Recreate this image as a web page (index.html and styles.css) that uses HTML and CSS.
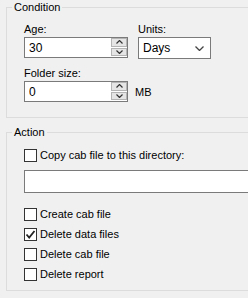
FILE: index.html
```html
<!DOCTYPE html>
<html lang="en">
<head>
    <meta charset="UTF-8">
    <meta name="viewport" content="width=device-width, initial-scale=1.0">
    <title>Cleanup rule</title>
    <link rel="stylesheet" href="styles.css">
</head>
<body>
    <div class="dialog">
        <fieldset class="group condition">
            <legend>Condition</legend>
            <div class="group-body">
                <div class="row">
                    <div class="field">
                        <label class="caption">Age:</label>
                        <div class="spin">
                            <input class="spin-input" type="text" value="30">
                            <div class="spin-btns">
                                <span class="spin-btn"><svg width="7" height="4" viewBox="0 0 7 4"><path d="M0.5 3.5 L3.5 0.5 L6.5 3.5" fill="none" stroke="#333" stroke-width="1.2"/></svg></span>
                                <span class="spin-btn"><svg width="7" height="4" viewBox="0 0 7 4"><path d="M0.5 0.5 L3.5 3.5 L6.5 0.5" fill="none" stroke="#333" stroke-width="1.2"/></svg></span>
                            </div>
                        </div>
                    </div>
                    <div class="field units">
                        <label class="caption">Units:</label>
                        <div class="select">
                            <span>Days</span>
                            <svg width="9" height="5" viewBox="0 0 9 5"><path d="M0.5 0.5 L4.5 4.5 L8.5 0.5" fill="none" stroke="#444" stroke-width="1.3"/></svg>
                        </div>
                    </div>
                </div>
                <div class="field folder">
                    <label class="caption">Folder size:</label>
                    <div class="spin-row">
                        <div class="spin">
                            <input class="spin-input" type="text" value="0">
                            <div class="spin-btns">
                                <span class="spin-btn"><svg width="7" height="4" viewBox="0 0 7 4"><path d="M0.5 3.5 L3.5 0.5 L6.5 3.5" fill="none" stroke="#333" stroke-width="1.2"/></svg></span>
                                <span class="spin-btn"><svg width="7" height="4" viewBox="0 0 7 4"><path d="M0.5 0.5 L3.5 3.5 L6.5 0.5" fill="none" stroke="#333" stroke-width="1.2"/></svg></span>
                            </div>
                        </div>
                        <span class="unit">MB</span>
                    </div>
                </div>
            </div>
        </fieldset>

        <fieldset class="group action">
            <legend>Action</legend>
            <div class="group-body">
                <label class="check"><span class="box"></span>Copy cab file to this directory:</label>
                <input class="path-input" type="text" value="">
                <div class="checks">
                    <label class="check"><span class="box"></span>Create cab file</label>
                    <label class="check"><span class="box"><svg width="11" height="11" viewBox="0 0 11 11"><path d="M1.5 5.5 L4.2 8.5 L9.5 2" fill="none" stroke="#222" stroke-width="1.8"/></svg></span>Delete data files</label>
                    <label class="check"><span class="box"></span>Delete cab file</label>
                    <label class="check"><span class="box"></span>Delete report</label>
                </div>
            </div>
        </fieldset>
    </div>
</body>
</html>
```

FILE: styles.css
```css
body {
    margin: 0;
    background-color: #f0f0f0;
    font-family: 'Liberation Sans', Arial, sans-serif;
    font-size: 11px;
    color: #000;
    overflow: hidden;
}
.dialog {
    width: 300px;
}
.group {
    margin: 0 0 0 6px;
    padding: 0;
    border: 1px solid #dcdcdc;
    min-width: 0;
}
.group legend {
    margin-left: 5px;
    padding: 0 2px;
    line-height: 14px;
}
.group-body {
    padding: 8px 17px 0 17px;
}
.condition {
    height: 118px;
    box-sizing: border-box;
}
.action {
    margin-top: 7px;
    padding-bottom: 9px;
}
.row {
    display: flex;
    gap: 10px;
}
.field {
    display: flex;
    flex-direction: column;
}
.caption {
    line-height: 14px;
    margin-bottom: 1px;
}
.folder {
    margin-top: 7px;
}
.spin-row {
    display: flex;
    align-items: center;
    gap: 7px;
}
.spin {
    display: flex;
    height: 21px;
}
.spin-input {
    width: 86px;
    height: 21px;
    box-sizing: border-box;
    border: 1px solid #7a7a7a;
    border-right: none;
    background: #fff;
    font: inherit;
    font-size: 12px;
    padding: 0 4px;
    margin: 0;
    outline: none;
}
.spin-btns {
    display: flex;
    flex-direction: column;
    gap: 1px;
    padding: 0 0 0 1px;
    border: 1px solid #7a7a7a;
    border-left: none;
    background: #fff;
}
.spin-btn {
    width: 16px;
    height: 8.5px;
    box-sizing: border-box;
    background: #e5e5e5;
    border: 1px solid #b4b4b4;
    display: flex;
    align-items: center;
    justify-content: center;
}
.select {
    width: 73px;
    height: 22px;
    box-sizing: border-box;
    border: 1px solid #7a7a7a;
    background: #fff;
    display: flex;
    align-items: center;
    justify-content: space-between;
    padding: 0 6px 0 4px;
    font-size: 12px;
}
.check {
    display: flex;
    align-items: center;
    gap: 3px;
    line-height: 14px;
    height: 14px;
}
.action .group-body {
    padding-top: 9px;
}
.box {
    width: 13px;
    height: 13px;
    box-sizing: border-box;
    border: 1px solid #333;
    background: #fff;
    display: flex;
    align-items: center;
    justify-content: center;
}
.path-input {
    display: block;
    width: 260px;
    height: 23px;
    box-sizing: border-box;
    margin: 8px 0 0 0;
    border: 1px solid #7a7a7a;
    background: #fff;
    font: inherit;
    outline: none;
}
.checks {
    margin-top: 14px;
    display: flex;
    flex-direction: column;
    gap: 6px;
}
```
